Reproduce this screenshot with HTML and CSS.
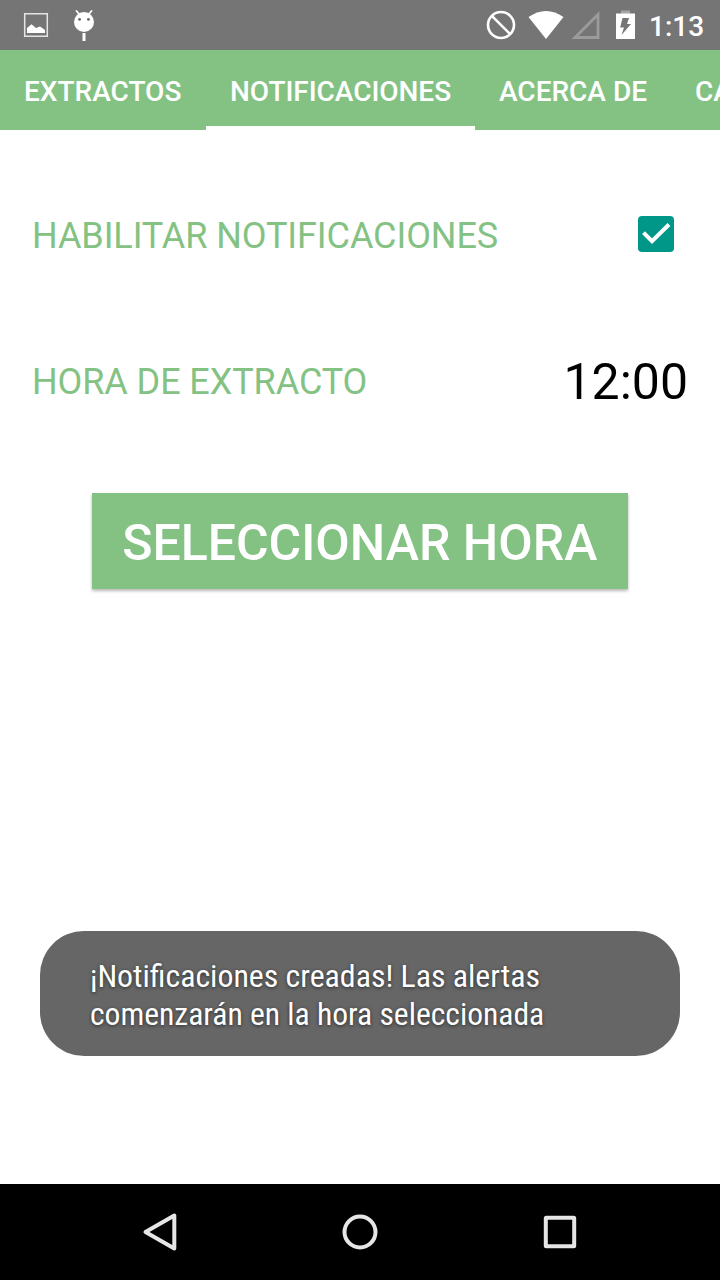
FILE: index.html
```html
<!DOCTYPE html>
<html lang="es">
<head>
<meta charset="utf-8">
<title>Notificaciones</title>
<link rel="stylesheet" href="styles.css">
</head>
<body>
<div class="screen">
  <header class="status">
    <svg class="status-left" width="100" height="50" viewBox="0 0 100 50">
      <path d="M24.700 13.700H47.300V36.300H24.700Z" fill="none" stroke="#e4e6e2" stroke-width="1.500"/>
      <path d="M27 33V28L31.500 24.300L36 28L40 26.500L45 30V33Z" fill="#fff"/>
      <circle cx="84" cy="22" r="10" fill="#fff"/>
      <path d="M79.500 14.500L76.500 11M88.500 14.500L91.500 11" stroke="#fff" stroke-width="1.800" stroke-linecap="round"/>
      <path d="M84 33V41" stroke="#fff" stroke-width="3"/>
      <circle cx="79.600" cy="19.400" r="1.400" fill="#666"/><circle cx="88.400" cy="19.400" r="1.400" fill="#666"/>
    </svg>
    <svg class="status-icons" width="160" height="50" viewBox="480 0 160 50">
      <circle cx="501" cy="25" r="13" fill="none" stroke="#fff" stroke-width="2.600"/>
      <path d="M491.800 15.800L510.200 34.200" stroke="#fff" stroke-width="2.600"/>
      <path d="M528.500 17Q546 5 563.500 17L546 39Z" fill="#fff"/>
      <path d="M598 14.500V37.500H575Z" fill="none" stroke="#9b9b9b" stroke-width="2.800"/>
      <path d="M621 10.500H630V14H621Z" fill="#a6a6a6"/>
      <path d="M616 13.500H635V39H616Z" fill="#fff"/>
      <path d="M622.500 18H629L627 24H631L621.500 35L624 27.500H620.200Z" fill="#757575"/>
    </svg>
    <span class="clock">1:13</span>
  </header>
  <nav class="tabs">
    <span class="tab tab-first">EXTRACTOS</span>
    <span class="tab tab-active">NOTIFICACIONES</span>
    <span class="tab">ACERCA DE</span>
    <span class="tab">CA</span>
  </nav>
  <main class="content">
    <label class="row row-first">
      <span class="label label-check">HABILITAR NOTIFICACIONES</span>
      <svg class="check" width="36" height="36" viewBox="0 0 36 36">
        <rect width="36" height="36" rx="4" fill="#009688"/>
        <path d="M5.500 16.700L14 25.200L31 8.500" fill="none" stroke="#fff" stroke-width="4"/>
      </svg>
    </label>
    <div class="row">
      <span class="label">HORA DE EXTRACTO</span>
      <span class="time">12:00</span>
    </div>
    <button class="pick">SELECCIONAR HORA</button>
  </main>
  <footer class="navbar">
    <svg width="48" height="48" viewBox="136 1208 48 48"><path d="M174.300 1215.500V1248.500L145.500 1232Z"/></svg>
    <svg width="48" height="48" viewBox="336 1208 48 48"><circle cx="360" cy="1232" r="15.500"/></svg>
    <svg width="48" height="48" viewBox="536 1208 48 48"><rect x="545.800" y="1217.800" width="28.400" height="28.400" rx="0.500"/></svg>
  </footer>
  <div class="toast"><span class="toast-line toast-title">¡Notificaciones creadas! Las alertas</span><span class="toast-line toast-detail">comenzarán en la hora seleccionada</span></div>
</div>
</body>
</html>
```
FILE: styles.css
```css
body { margin: 0; }
.screen {
  position: relative;
  display: flex;
  flex-direction: column;
  width: 720px;
  height: 1280px;
  overflow: hidden;
  background: #fff;
  font-family: Roboto, sans-serif;
}
svg { display: block; flex: none; }
.status {
  display: flex;
  height: 50px;
  background: #757575;
}
.status-icons { margin-left: auto; }
.clock {
  width: 71px;
  padding-left: 9px;
  color: #fff;
  font-size: 28px;
  font-weight: 500;
  line-height: 54px;
}
.tabs {
  display: flex;
  height: 80px;
  overflow: hidden;
  background: #84c284;
  color: #fff;
  font-size: 28px;
  font-weight: 500;
  line-height: 84px;
}
.tab {
  flex: none;
  box-sizing: border-box;
  height: 80px;
  padding: 0 24px;
}
.tab-first { width: 206px; }
.tab-active {
  width: 269px;
  box-shadow: inset 0 -4px #fff;
  letter-spacing: -0.04px;
}
.content {
  display: flex;
  flex: 1;
  flex-direction: column;
}
.row {
  display: flex;
  align-items: center;
  justify-content: space-between;
  height: 60px;
  padding: 0 32px;
}
.row-first { margin: 74px 0 88px; }
.label {
  color: #84c284;
  font-size: 36px;
  letter-spacing: -0.09px;
  line-height: 60px;
}
.label-check { padding-top: 4px; }
.check { margin-right: 14px; }
.time {
  color: #000;
  font-size: 50px;
  line-height: 60px;
}
.pick {
  align-self: flex-start;
  width: 535.5px;
  height: 96px;
  margin: 81px 0 0 92px;
  padding: 4px 0 0;
  border: 0;
  background: #84c284;
  box-shadow: 0 2px 3px rgba(0, 0, 0, 0.28);
  color: #fff;
  font: 500 50px/92px Roboto, sans-serif;
  white-space: nowrap;
}
.navbar {
  display: flex;
  align-items: center;
  justify-content: center;
  gap: 152px;
  height: 96px;
  background: #000;
}
.navbar svg {
  fill: none;
  stroke: #e6e6e6;
  stroke-width: 4;
  stroke-linejoin: round;
}
.toast {
  position: absolute;
  top: 931px;
  left: 40px;
  box-sizing: border-box;
  width: 640px;
  height: 125px;
  padding: 26px 50px;
  border-radius: 44px;
  background: #666;
  color: #fff;
  font-family: "Roboto Condensed", Roboto, sans-serif;
  font-size: 32px;
  font-stretch: condensed;
  line-height: 38px;
  text-shadow: 0 1px 4px rgba(0, 0, 0, 0.6);
}
.toast-line {
  display: block;
  width: max-content;
  font-variant-ligatures: common-ligatures;
  white-space: nowrap;
  transform-origin: left center;
}
.toast-title { transform: scaleX(0.995); }
.toast-detail { transform: scaleX(0.987); }
```
